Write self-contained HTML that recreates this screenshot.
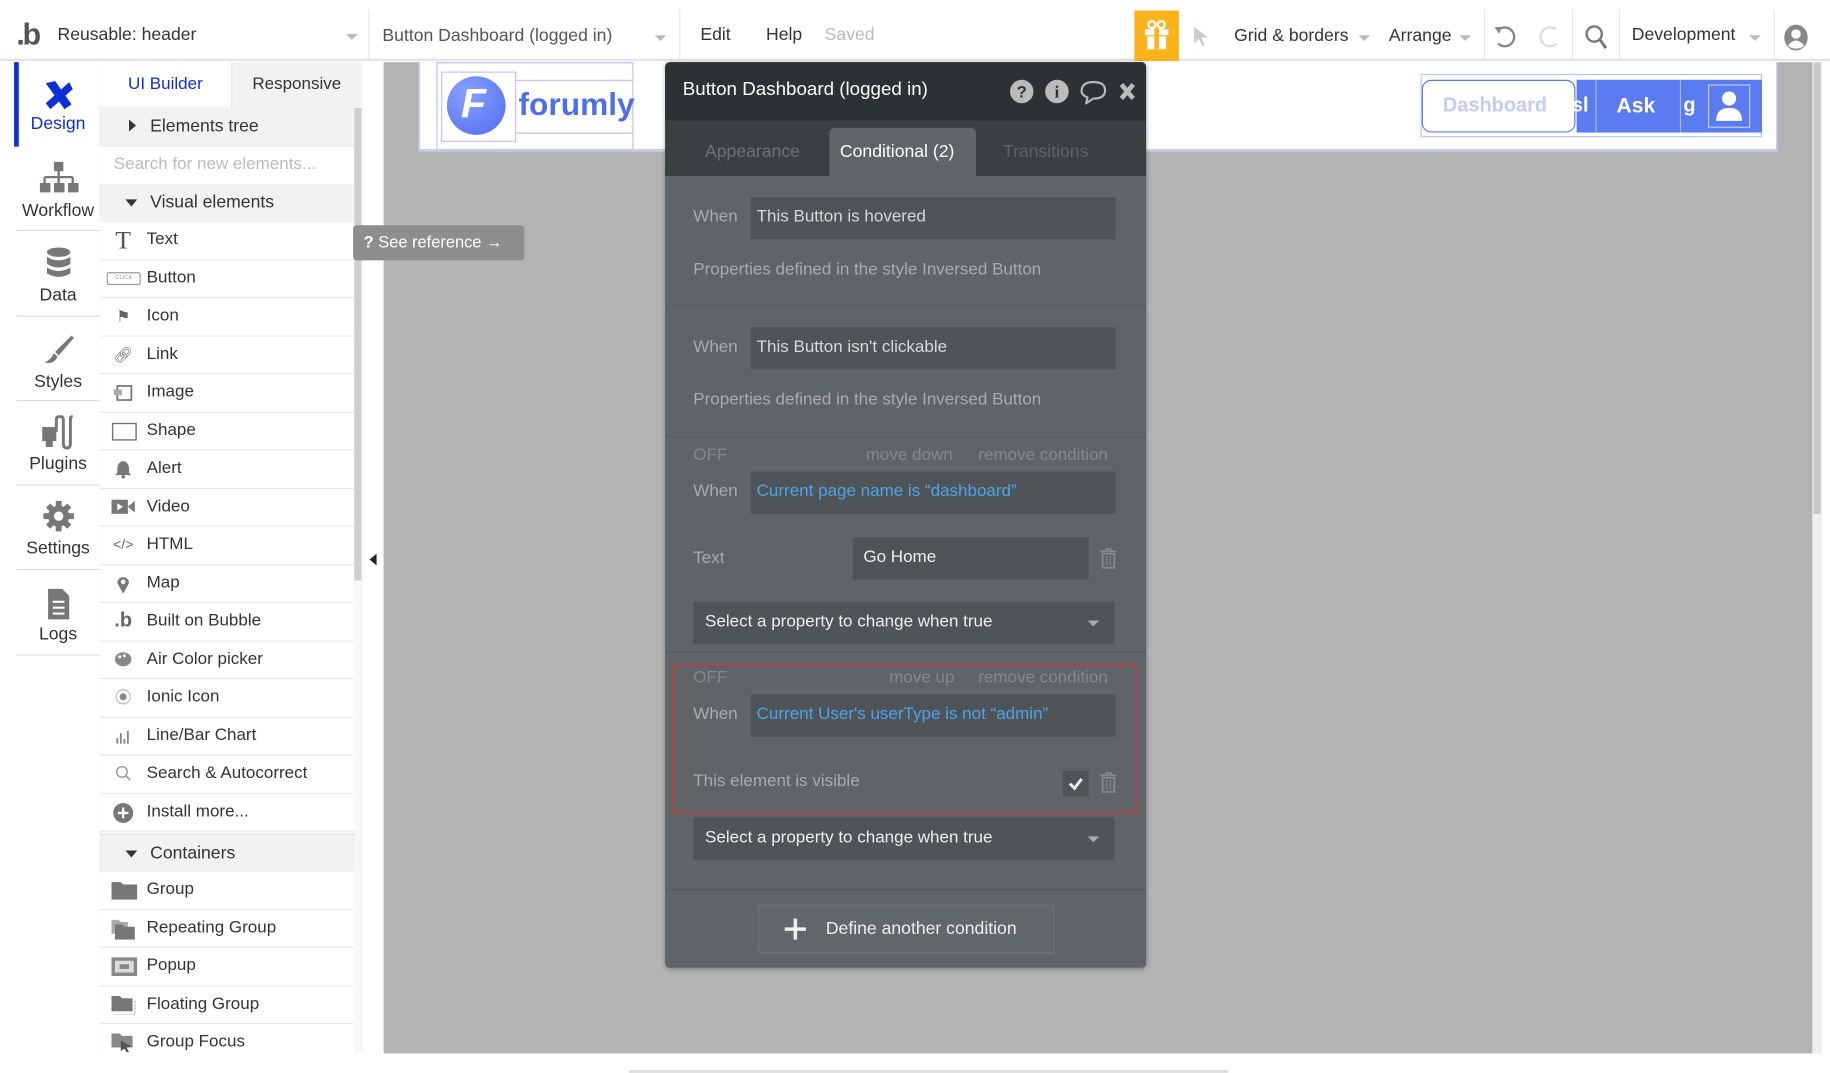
<!DOCTYPE html>
<html><head><meta charset="utf-8">
<style>
*{box-sizing:border-box;margin:0;padding:0}
html,body{width:1830px;height:1070px;overflow:hidden;background:#fff;font-family:"Liberation Sans",sans-serif}
#w{position:absolute;left:0;top:0;width:1560px;height:912px;transform:scale(1.17308);transform-origin:0 0}
.a{position:absolute}
.t{position:absolute;white-space:nowrap}
.tb{font-size:15px;color:#333}
.arr{position:absolute;width:0;height:0;border-left:5px solid transparent;border-right:5px solid transparent;border-top:5px solid #bbb}
.vd{position:absolute;top:8px;height:44px;width:1px;background:#e6e6e6}
.nav{position:absolute;left:14px;width:71px;border-bottom:1px solid #ddd;text-align:center;font-size:15px;color:#333}
.row{position:absolute;left:85px;width:217px;height:32.5px;border-bottom:1px solid #e8e8e8;background:#fff;font-size:14.5px;color:#333}
.row span{position:absolute;left:40px;top:7px}
.row i{position:absolute;left:10px;top:8px;width:20px;height:16px;font-style:normal;color:#666;font-size:13px;text-align:center}
.hdr{background:#f2f2f2}
.pl{color:#a8abae;font-size:14.5px}
.inp{position:absolute;background:#4f5458}
</style></head><body><div id="w">
<!-- top bar -->
<div class="a" style="left:0;top:0;width:1560px;height:52px;background:#fff;border-bottom:2px solid #e4e4e4"></div>
<div class="t" style="left:14px;top:14px;font-size:26px;color:#555;font-weight:bold;letter-spacing:-2px">.b</div>
<div class="t tb" style="left:49px;top:21px">Reusable: header</div>
<div class="arr" style="left:295px;top:29px"></div>
<div class="vd" style="left:314px"></div>
<div class="t tb" style="left:326px;top:22px;color:#555">Button Dashboard (logged in)</div>
<div class="arr" style="left:558px;top:30px"></div>
<div class="vd" style="left:579px"></div>
<div class="t tb" style="left:597px;top:21px">Edit</div>
<div class="t tb" style="left:653px;top:21px">Help</div>
<div class="t tb" style="left:703px;top:21px;color:#bbb">Saved</div>
<div class="a" style="left:967px;top:9px;width:38px;height:43px;background:#fbb31b"></div>
<svg class="a" style="left:973px;top:16px" width="26" height="28" viewBox="0 0 26 28"><rect x="3" y="9" width="20" height="5" fill="#fff"/><rect x="5" y="15" width="16" height="11" fill="#fff"/><rect x="11" y="9" width="4" height="17" fill="#fbb31b"/><circle cx="9" cy="5" r="3" fill="none" stroke="#fff" stroke-width="2"/><circle cx="17" cy="5" r="3" fill="none" stroke="#fff" stroke-width="2"/></svg>
<svg class="a" style="left:1015px;top:21px" width="18" height="20"><path d="M3 2 L15 11 L9 11 L12 18 L10 18 L7 12 L3 16Z" fill="#ccc"/></svg>
<div class="t tb" style="left:1052px;top:22px">Grid &amp; borders</div>
<div class="arr" style="left:1158px;top:30px"></div>
<div class="t tb" style="left:1184px;top:22px">Arrange</div>
<div class="arr" style="left:1244px;top:30px"></div>
<div class="vd" style="left:1265px"></div>
<svg class="a" style="left:1272px;top:20px" width="22" height="24"><path d="M6 5 A8 8 0 1 1 5 17" fill="none" stroke="#888" stroke-width="2"/><path d="M2 3 L8 3 L6 9Z" fill="#888"/></svg>
<svg class="a" style="left:1310px;top:20px" width="22" height="24"><path d="M16 5 A8 8 0 1 0 17 17" fill="none" stroke="#ddd" stroke-width="2"/></svg>
<div class="vd" style="left:1340px"></div>
<svg class="a" style="left:1350px;top:20px" width="22" height="24"><circle cx="9" cy="9" r="6.5" fill="none" stroke="#777" stroke-width="2"/><path d="M14 14 L19 21" stroke="#777" stroke-width="2.5"/></svg>
<div class="vd" style="left:1380px"></div>
<div class="t tb" style="left:1391px;top:21px">Development</div>
<div class="arr" style="left:1491px;top:30px"></div>
<div class="vd" style="left:1512px"></div>
<svg class="a" style="left:1520px;top:20px" width="22" height="24"><ellipse cx="11" cy="12" rx="10" ry="11" fill="#888"/><circle cx="11" cy="9" r="4" fill="#fff"/><path d="M4 19 Q11 10 18 19 Q11 24 4 19Z" fill="#fff"/></svg>

<!-- nav column -->
<div class="a" style="left:12px;top:53px;width:4px;height:72px;background:#0d2fdb"></div>
<div class="nav" style="top:53px;height:72px;color:#0d2fdb;border:none">
<svg style="margin-top:14px" width="30" height="28" viewBox="0 0 30 28"><path d="M4 4 L12 2 L26 22 L20 26Z M24 3 L27 9 L8 26 L4 21Z" fill="#0d2fdb"/></svg>
<div style="margin-top:-2px">Design</div></div>
<div class="nav" style="top:125px;height:72px"><svg style="margin-top:12px" width="34" height="28"><rect x="13" y="1" width="8" height="8" fill="#777"/><path d="M17 9 V14 M5 14 H29 M5 14 V19 M17 14 V19 M29 14 V19" stroke="#777" stroke-width="2"/><rect x="1" y="19" width="9" height="8" fill="#777"/><rect x="13" y="19" width="9" height="8" fill="#777"/><rect x="25" y="19" width="9" height="8" fill="#777"/></svg><div style="margin-top:2px">Workflow</div></div>
<div class="nav" style="top:198px;height:72px"><svg style="margin-top:12px" width="24" height="28"><ellipse cx="12" cy="5" rx="10" ry="4" fill="#777"/><path d="M2 9 Q12 15 22 9 V15 Q12 21 2 15Z M2 18 Q12 24 22 18 V23 Q12 29 2 23Z" fill="#777"/></svg><div style="margin-top:1px">Data</div></div>
<div class="nav" style="top:270px;height:72px"><svg style="margin-top:14px" width="30" height="28"><path d="M26 2 L12 16 L15 19 L28 4Z" fill="#777"/><path d="M11 17 L14 20 Q11 27 3 25 Q8 23 11 17Z" fill="#777"/></svg><div style="margin-top:1px">Styles</div></div>
<div class="nav" style="top:342px;height:72px"><svg style="margin-top:12px" width="32" height="30"><path d="M2 10 H14 V22 H11 V27 H5 V22 H2Z" fill="#777"/><path d="M14 14 V4 Q14 1 17 1 Q20 1 20 4 V24 Q20 28 23 28 Q26 28 26 24 V3 Q26 1 28 1" fill="none" stroke="#777" stroke-width="2.5"/></svg><div style="margin-top:-1px">Plugins</div></div>
<div class="nav" style="top:414px;height:72px"><svg style="margin-top:12px" width="28" height="28" viewBox="0 0 28 28"><circle cx="14" cy="14" r="9" fill="#777"/><g stroke="#777" stroke-width="5"><path d="M14 1 V27 M1 14 H27 M5 5 L23 23 M23 5 L5 23"/></g><circle cx="14" cy="14" r="4" fill="#fff"/></svg><div style="margin-top:1px">Settings</div></div>
<div class="nav" style="top:487px;height:72px"><svg style="margin-top:14px" width="22" height="28"><path d="M2 1 H14 L20 7 V27 H2Z" fill="#777"/><path d="M6 12 H16 M6 17 H16 M6 22 H16" stroke="#fff" stroke-width="1.8"/></svg><div style="margin-top:-1px">Logs</div></div>

<!-- elements panel -->
<div class="a" style="left:85px;top:53px;width:225px;height:845px;background:#f7f7f7;border-left:1px solid #e6e6e6"></div>
<div class="a" style="left:85px;top:53px;width:112px;height:38px;background:#fff;font-size:14.5px;color:#0d2fdb;text-align:center;line-height:38px">UI Builder</div>
<div class="a" style="left:197px;top:53px;width:111px;height:38px;background:#f2f2f2;border-left:1px solid #e4e4e4;font-size:14.5px;color:#333;text-align:center;line-height:38px">Responsive</div>
<div class="row hdr" style="top:92px"><span style="left:43px;font-size:15px">Elements tree</span><div class="a" style="left:25px;top:10px;border-top:5px solid transparent;border-bottom:5px solid transparent;border-left:6px solid #333"></div></div>
<div class="row" style="top:125px"><span style="left:12px;color:#bbb">Search for new elements...</span></div>
<div class="row hdr" style="top:157px"><span style="left:43px;font-size:15px">Visual elements</span><div class="a" style="left:22px;top:13px;border-left:5px solid transparent;border-right:5px solid transparent;border-top:6px solid #333"></div></div>
<div class="row" style="top:189px"><i style="font-family:'Liberation Serif',serif;font-size:22px;top:3px;color:#555">T</i><span>Text</span></div>
<div class="row" style="top:221.5px"><i style="left:6px;top:10px;width:29px;height:11px;border:1px solid #999;border-radius:2px;font-size:5px;line-height:9px;color:#999">CLICK</i><span>Button</span></div>
<div class="row" style="top:254px"><i>⚑</i><span>Icon</span></div>
<div class="row" style="top:286.5px"><i>🔗︎</i><span>Link</span></div>
<div class="row" style="top:319px"><i><svg width="18" height="16"><rect x="4" y="2" width="12" height="12" fill="none" stroke="#777" stroke-width="1.5"/><rect x="1" y="5" width="7" height="5" fill="#aaa"/></svg></i><span>Image</span></div>
<div class="row" style="top:351.5px"><i><svg width="22" height="16"><rect x="1" y="1" width="20" height="14" fill="none" stroke="#777" stroke-width="1.2"/></svg></i><span>Shape</span></div>
<div class="row" style="top:384px"><i><svg width="16" height="16"><path d="M8 1 Q3 2 3 8 V11 L1 13 H15 L13 11 V8 Q13 2 8 1Z" fill="#777"/><circle cx="8" cy="14.5" r="1.5" fill="#777"/></svg></i><span>Alert</span></div>
<div class="row" style="top:416.5px"><i><svg width="20" height="14"><rect x="0" y="1" width="14" height="12" fill="#777"/><path d="M14 7 L20 2 V12Z" fill="#777"/><path d="M5 4 L10 7 L5 10Z" fill="#fff"/></svg></i><span>Video</span></div>
<div class="row" style="top:449px"><i style="font-size:12px">&lt;/&gt;</i><span>HTML</span></div>
<div class="row" style="top:481.5px"><i><svg width="12" height="16"><path d="M6 16 L1 7 A5 5 0 1 1 11 7Z" fill="#777"/><circle cx="6" cy="6" r="2" fill="#fff"/></svg></i><span>Map</span></div>
<div class="row" style="top:514px"><i style="font-weight:bold;font-size:17px;top:5px">.b</i><span>Built on Bubble</span></div>
<div class="row" style="top:546.5px"><i><svg width="16" height="14"><ellipse cx="8" cy="7" rx="7" ry="6" fill="#888"/><circle cx="5" cy="5" r="1.3" fill="#fff"/><circle cx="9" cy="4" r="1.3" fill="#fff"/></svg></i><span>Air Color picker</span></div>
<div class="row" style="top:579px"><i><svg width="14" height="14"><circle cx="7" cy="7" r="6" fill="none" stroke="#bbb"/><circle cx="7" cy="7" r="3" fill="#888"/></svg></i><span>Ionic Icon</span></div>
<div class="row" style="top:611.5px"><i><svg width="14" height="14"><path d="M2 14V9 M5 14V5 M8 14V10 M11 14V3" stroke="#888" stroke-width="1.6"/></svg></i><span>Line/Bar Chart</span></div>
<div class="row" style="top:644px"><i><svg width="14" height="14"><circle cx="6" cy="6" r="4.5" fill="none" stroke="#999" stroke-width="1.2"/><path d="M9 9 L13 13" stroke="#999" stroke-width="1.3"/></svg></i><span>Search &amp; Autocorrect</span></div>
<div class="row" style="top:676.5px"><i><svg width="18" height="18" style="margin-top:-1px"><circle cx="9" cy="9" r="8.5" fill="#777"/><path d="M9 4.5V13.5 M4.5 9H13.5" stroke="#fff" stroke-width="2"/></svg></i><span>Install more...</span></div>
<div class="row hdr" style="top:711px;border-top:1px solid #e0e0e0"><span style="left:43px;font-size:15px">Containers</span><div class="a" style="left:22px;top:13px;border-left:5px solid transparent;border-right:5px solid transparent;border-top:6px solid #333"></div></div>
<div class="row" style="top:743px"><i><svg width="22" height="16"><path d="M0 1 H8 L10 3 H22 V16 H0Z" fill="#777"/></svg></i><span>Group</span></div>
<div class="row" style="top:775.5px"><i><svg width="20" height="17"><path d="M0 0 H6 L8 2 H14 V12 H0Z" fill="#aaa"/><path d="M3 4 H9 L11 6 H20 V17 H3Z" fill="#777"/></svg></i><span>Repeating Group</span></div>
<div class="row" style="top:808px"><i><svg width="22" height="16"><rect x="0" y="0" width="22" height="16" fill="#888"/><rect x="3" y="3" width="16" height="10" fill="#ddd"/><rect x="7" y="6" width="8" height="4" fill="#888"/></svg></i><span>Popup</span></div>
<div class="row" style="top:840.5px"><i><svg width="22" height="16"><path d="M0 0 H7 L9 2 H18 V13 H0Z" fill="#777"/><path d="M20 4 V16 H3" fill="none" stroke="#aaa" stroke-dasharray="2 1"/></svg></i><span>Floating Group</span></div>
<div class="row" style="top:873px;height:25px;border-bottom:none"><i><svg width="20" height="16"><path d="M0 0 H7 L9 2 H18 V12 H0Z" fill="#888"/><path d="M8 6 L17 11 L13 12 L15 16 L13 16 L11 13 L8 15Z" fill="#555"/></svg></i><span>Group Focus</span></div>
<div class="a" style="left:302px;top:92px;width:6px;height:403px;background:#cfcfcf"></div>
<div class="a" style="left:315px;top:472px;border-top:5px solid transparent;border-bottom:5px solid transparent;border-right:6px solid #222"></div>

<!-- canvas -->
<div class="a" style="left:327px;top:53px;width:1218px;height:845px;background:#b3b3b3"></div>
<div class="a" style="left:357px;top:53px;width:1158px;height:76px;background:#fff;border-bottom:2px solid #c6cdf5;border-left:1px solid #c6cdf5;border-right:1px solid #c6cdf5"></div>
<div class="a" style="left:372px;top:53px;width:168px;height:75px;border:1px solid #b8c4f5"></div>
<div class="a" style="left:376px;top:61px;width:64px;height:60px;border:1px solid #b8c4f5"></div>
<div class="a" style="left:381px;top:65px;width:50px;height:50px;border-radius:50%;background:radial-gradient(circle at 35% 30%,#8aa0ff,#4f6cf0)"></div>
<div class="t" style="left:393px;top:69px;color:#fff;font-size:35px;font-weight:bold;font-style:italic">F</div>
<div class="a" style="left:440px;top:68px;width:100px;height:46px;border-top:1px solid #b8c4f5;border-bottom:1px solid #b8c4f5"></div>
<div class="t" style="left:442px;top:74px;color:#4f6ee8;font-size:27px;font-weight:bold">forumly</div>
<div class="a" style="left:1211px;top:63px;width:291px;height:54px;border:1px solid #b8c4f5"></div>
<div class="a" style="left:1344px;top:68px;width:158px;height:45px;background:#5b7bf0"></div>
<div class="a" style="left:1212px;top:68px;width:131px;height:45px;background:#fff;border:1px solid #5b7bf0;border-radius:8px"></div>
<div class="t" style="left:1230px;top:80px;color:#c2cbf3;font-size:17px;font-weight:bold">Dashboard</div>
<div class="t" style="left:1340px;top:80px;color:#fff;font-size:17px;font-weight:bold">sl</div>
<div class="a" style="left:1360px;top:68px;width:1px;height:45px;background:#a8b6f5"></div>
<div class="t" style="left:1378px;top:80px;color:#fff;font-size:18px;font-weight:bold">Ask</div>
<div class="a" style="left:1432px;top:68px;width:1px;height:45px;background:#a8b6f5"></div>
<div class="t" style="left:1435px;top:80px;color:#fff;font-size:17px;font-weight:bold">g</div>
<div class="a" style="left:1451px;top:70px;width:45px;height:42px;border-radius:8px;background:#5b7bf0"></div>
<div class="a" style="left:1456px;top:72px;width:36px;height:37px;border:1px solid #c2cbf3"></div>
<svg class="a" style="left:1461px;top:76px" width="26" height="28"><circle cx="13" cy="8" r="6" fill="#fff"/><path d="M2 27 Q2 16 13 16 Q24 16 24 27Z" fill="#fff"/></svg>
<div class="a" style="left:1545px;top:53px;width:8px;height:845px;background:#eee"></div>
<div class="a" style="left:1546px;top:53px;width:6px;height:385px;background:#c8c8c8"></div>
<div class="a" style="left:536px;top:912px;width:511px;height:3px;background:#e0e0e0;border-radius:2px"></div>

<!-- see reference -->
<div class="a" style="left:301px;top:192px;width:146px;height:30px;background:#8e8e8e;border-radius:3px"></div>
<div class="t" style="left:310px;top:198px;color:#fff;font-size:14px"><b>?</b> See reference →</div>

<!-- property editor -->
<div class="a" style="left:567px;top:53px;width:410px;height:772px;background:#5f6468;border-radius:4px;box-shadow:0 1px 4px rgba(0,0,0,.3)"></div>
<div class="a" style="left:567px;top:53px;width:410px;height:50px;background:#2b3134;border-radius:4px 4px 0 0"></div>
<div class="t" style="left:582px;top:68px;color:#fff;font-size:16px">Button Dashboard (logged in)</div>
<svg class="a" style="left:860px;top:67px" width="110" height="22"><circle cx="11" cy="11" r="10" fill="#bbb"/><text x="11" y="16" font-size="14" font-weight="bold" fill="#2b3134" text-anchor="middle" font-family="Liberation Sans">?</text><circle cx="41" cy="11" r="10" fill="#bbb"/><text x="41" y="16" font-size="14" font-weight="bold" fill="#2b3134" text-anchor="middle" font-family="Liberation Serif">i</text><path d="M62 11 Q62 3 72 3 Q82 3 82 10 Q82 17 72 17 L66 21 L67 16 Q62 14 62 11Z" fill="none" stroke="#bbb" stroke-width="1.8"/><path d="M96 5 L106 17 M106 5 L96 17" stroke="#bbb" stroke-width="4"/></svg>
<div class="a" style="left:567px;top:103px;width:410px;height:47px;background:#3a3f42"></div>
<div class="a" style="left:707px;top:109px;width:125px;height:41px;background:#5f6468;border-radius:4px 4px 0 0"></div>
<div class="t" style="left:601px;top:121px;color:#6c7175;font-size:15px">Appearance</div>
<div class="t" style="left:716px;top:121px;color:#fff;font-size:15px">Conditional (2)</div>
<div class="t" style="left:855px;top:121px;color:#5c6165;font-size:15px">Transitions</div>

<div class="t pl" style="left:591px;top:177px">When</div>
<div class="inp" style="left:640px;top:168px;width:311px;height:36px"></div>
<div class="t" style="left:645px;top:177px;color:#d6d8da;font-size:14.5px">This Button is hovered</div>
<div class="t pl" style="left:591px;top:222px">Properties defined in the style Inversed Button</div>
<div class="a" style="left:567px;top:260px;width:410px;height:1px;background:#575c60"></div>
<div class="t pl" style="left:591px;top:288px">When</div>
<div class="inp" style="left:640px;top:279px;width:311px;height:36px"></div>
<div class="t" style="left:645px;top:288px;color:#d6d8da;font-size:14.5px">This Button isn't clickable</div>
<div class="t pl" style="left:591px;top:333px">Properties defined in the style Inversed Button</div>
<div class="a" style="left:567px;top:372px;width:410px;height:1px;background:#575c60"></div>
<div class="t" style="left:591px;top:380px;color:#84888c;font-size:14.5px">OFF</div>
<div class="t" style="left:738px;top:380px;color:#84888c;font-size:14.5px">move down</div>
<div class="t" style="left:834px;top:380px;color:#84888c;font-size:14.5px">remove condition</div>
<div class="t pl" style="left:591px;top:411px">When</div>
<div class="inp" style="left:640px;top:402px;width:311px;height:36px"></div>
<div class="t" style="left:645px;top:411px;color:#4da3e8;font-size:14.5px">Current page name is “dashboard”</div>
<div class="t pl" style="left:591px;top:468px">Text</div>
<div class="inp" style="left:727px;top:458px;width:201px;height:36px"></div>
<div class="t" style="left:736px;top:467px;color:#eee;font-size:14.5px">Go Home</div>
<svg class="a" style="left:937px;top:467px" width="16" height="18"><path d="M1 3 H15 M6 3 V1 H10 V3" stroke="#84888c" stroke-width="1.5" fill="none"/><path d="M3 5 H13 V17 H3Z" fill="none" stroke="#84888c" stroke-width="1.5"/><path d="M6.5 7 V15 M9.5 7 V15" stroke="#84888c"/></svg>
<div class="inp" style="left:591px;top:513px;width:359px;height:36px"></div>
<div class="t" style="left:601px;top:522px;color:#eee;font-size:14.5px">Select a property to change when true</div>
<div class="arr" style="left:927px;top:529px;border-top-color:#aaa"></div>
<div class="a" style="left:567px;top:555px;width:410px;height:1px;background:#575c60"></div>
<div class="a" style="left:573px;top:566px;width:396px;height:127px;border:1.5px solid #e03030"></div>
<div class="t" style="left:591px;top:570px;color:#84888c;font-size:14.5px">OFF</div>
<div class="t" style="left:758px;top:570px;color:#84888c;font-size:14.5px">move up</div>
<div class="t" style="left:834px;top:570px;color:#84888c;font-size:14.5px">remove condition</div>
<div class="t pl" style="left:591px;top:601px">When</div>
<div class="inp" style="left:640px;top:592px;width:311px;height:36px"></div>
<div class="t" style="left:645px;top:601px;color:#4da3e8;font-size:14.5px">Current User's userType is not “admin”</div>
<div class="t pl" style="left:591px;top:658px">This element is visible</div>
<div class="inp" style="left:906px;top:657px;width:22px;height:22px"></div>
<svg class="a" style="left:910px;top:661px" width="14" height="14"><path d="M2 7 L6 11 L12 3" stroke="#eee" stroke-width="2.5" fill="none"/></svg>
<svg class="a" style="left:937px;top:658px" width="16" height="18"><path d="M1 3 H15 M6 3 V1 H10 V3" stroke="#84888c" stroke-width="1.5" fill="none"/><path d="M3 5 H13 V17 H3Z" fill="none" stroke="#84888c" stroke-width="1.5"/><path d="M6.5 7 V15 M9.5 7 V15" stroke="#84888c"/></svg>
<div class="inp" style="left:591px;top:697px;width:359px;height:36px"></div>
<div class="t" style="left:601px;top:706px;color:#eee;font-size:14.5px">Select a property to change when true</div>
<div class="arr" style="left:927px;top:713px;border-top-color:#aaa"></div>
<div class="a" style="left:567px;top:758px;width:410px;height:1px;background:#575c60"></div>
<div class="a" style="left:646px;top:771px;width:253px;height:42px;background:#62676b;border:1px solid #6e7377;border-radius:2px"></div>
<svg class="a" style="left:668px;top:782px" width="20" height="20"><path d="M10 1 V19 M1 10 H19" stroke="#eee" stroke-width="3"/></svg>
<div class="t" style="left:704px;top:783px;color:#eee;font-size:15px">Define another condition</div>
</div></body></html>
